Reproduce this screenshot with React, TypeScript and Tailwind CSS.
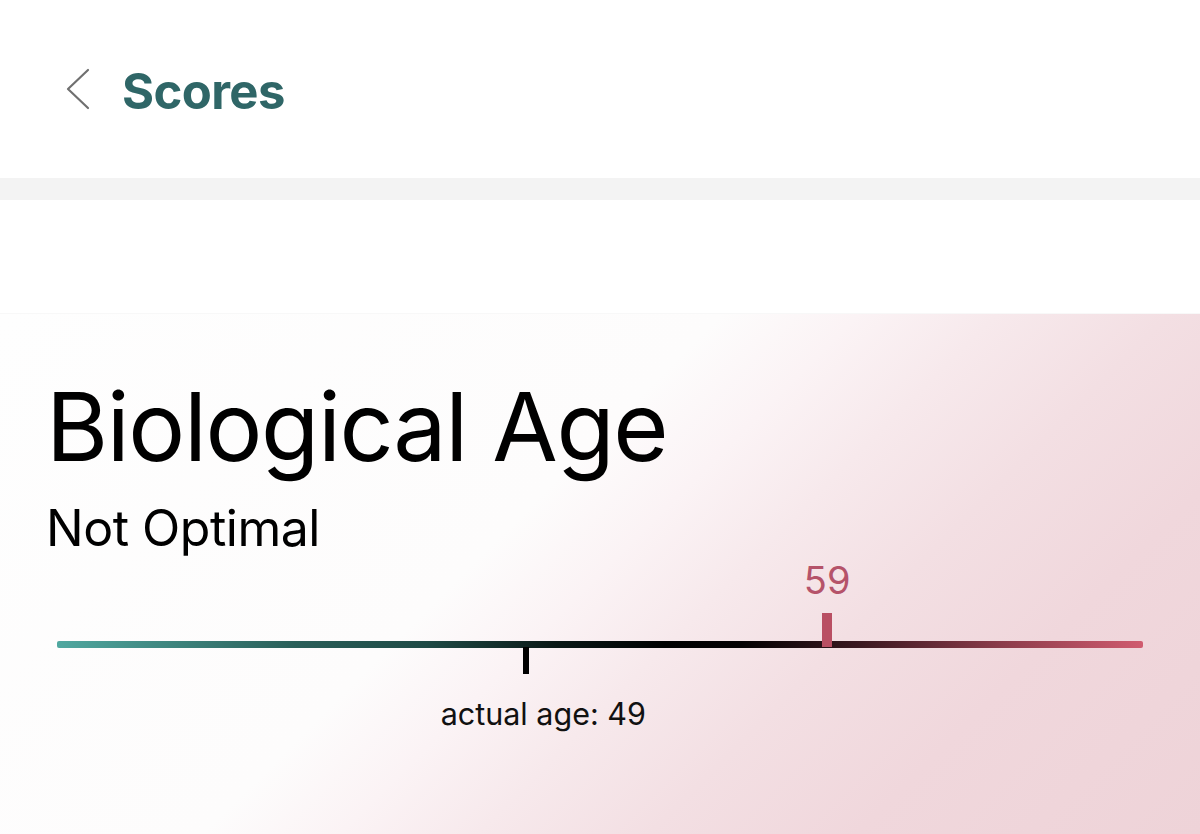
// bar scale, picked so the two markers land where the design has them
const minAge = 33.4;
const maxAge = 69.5;

const pos = (age: number) => `${((age - minAge) / (maxAge - minAge)) * 100}%`;

function AgeBar({ actual, bio }: { actual: number; bio: number }) {
	return (
		<div className="relative mx-[57px] mt-[85px] h-[150px]">
			<div
				className="absolute top-[-80px] -translate-x-1/2 text-[38px] leading-none text-[#b5536a]"
				style={{ left: pos(bio) }}
			>
				{bio}
			</div>
			<div className="h-[7px] w-full rounded-[2px] bg-[linear-gradient(90deg,#50a8a0_0%,#2a5f59_22%,#1f4b46_34%,#0a1816_46%,#000_56%,#050203_63%,#3b1820_74%,#8c3c4b_87%,#d05b6f_100%)]" />
			<div
				className="absolute top-[-28px] h-[34px] w-[10px] -translate-x-1/2 bg-[#b94f63]"
				style={{ left: pos(bio) }}
			/>
			<div
				className="absolute top-[6px] h-[27px] w-[6px] -translate-x-1/2 bg-black"
				style={{ left: pos(actual) }}
			/>
			<div
				className="absolute top-[58px] -translate-x-1/2 whitespace-nowrap text-[30.5px] leading-none text-[#111]"
				style={{ left: `calc(${pos(actual)} + 17px)` }}
			>
				actual age: {actual}
			</div>
		</div>
	);
}

export default function App() {
	return (
		<main className="flex h-[834px] w-[1200px] flex-col overflow-hidden bg-white font-['Inter',sans-serif]">
			<header className="flex h-[178px] items-center pl-[66px]">
				<svg width="24" height="42" viewBox="0 0 24 42" fill="none">
					<polyline points="22,2 2,21 22,40" stroke="#707070" strokeWidth="2.2" strokeLinecap="round" strokeLinejoin="round" />
				</svg>
				<h1 className="ml-[32px] mt-[4px] text-[49px] font-bold leading-none tracking-[-0.6px] text-[#2f6667]">Scores</h1>
			</header>
			<div className="h-[22px] bg-[#f3f3f3]" />
			<div className="h-[113px] bg-white" />
			<section className="flex-1 border-t border-[#f8f8f8] bg-[linear-gradient(135deg,#fefefe_0%,#fdfcfc_42%,#fbf3f5_50%,#f7e9ec_58%,#f3dfe3_68%,#f0d7dc_80%,#eed3d8_100%)] pt-[58px]">
				<div className="px-[46px]">
					<h2 className="text-[95px] leading-[110px] tracking-[-1.4px] text-black">Biological Age</h2>
					<p className="mt-[18px] text-[50px] leading-[56px] tracking-[-0.5px] text-black">Not Optimal</p>
				</div>
				<AgeBar actual={49} bio={59} />
			</section>
		</main>
	);
}
